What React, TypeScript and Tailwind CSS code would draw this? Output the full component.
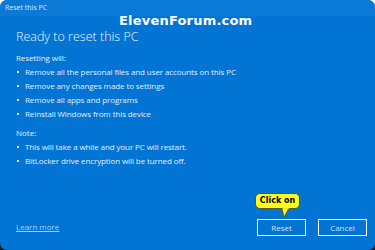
import React from "react";

const resetting = [
  "Remove all the personal files and user accounts on this PC",
  "Remove any changes made to settings",
  "Remove all apps and programs",
  "Reinstall Windows from this device",
];

const notes = [
  "This will take a while and your PC will restart.",
  "BitLocker drive encryption will be turned off.",
];

const Bullet = ({ text }: { text: string }) => (
  <li className="flex items-center h-[14px]">
    <span className="w-[2px] h-[2px] bg-[#d6e8f8] ml-[1px] mr-[6px]" />
    <span>{text}</span>
  </li>
);

const App = () => {
  return (
    <div className="w-[375px] h-[250px] bg-gradient-to-b from-white to-[#1c1c1c] overflow-hidden">
      <div
        className="relative w-full h-full rounded-[7px] bg-[#0174d4] flex flex-col text-[#e4f0fb] overflow-hidden"
        style={{ fontFamily: '"Open Sans", "Noto Sans", sans-serif' }}
      >
        <div className="h-[16px] bg-[#0b7ad7] flex items-center px-[5px] text-[7px] text-[#d8eafa]">
          Reset this PC
        </div>

        <div
          className="absolute left-[119px] top-[11px] text-white text-[13px] font-bold tracking-[0.2px]"
          style={{ fontFamily: '"DejaVu Sans", Verdana, sans-serif' }}
        >
          ElevenForum.com
        </div>

        <div className="flex-1 flex flex-col px-[16px] pt-[11px]">
          <h1 className="text-[12.5px] font-light leading-[20px] text-[#eef6fd]">
            Ready to reset this PC
          </h1>
          <p className="text-[8px] mt-[4px] leading-[14px] tracking-[-0.1px]">Resetting will:</p>
          <ul className="text-[8px] tracking-[-0.1px]">
            {resetting.map((t) => (
              <Bullet key={t} text={t} />
            ))}
          </ul>
          <p className="text-[8px] mt-[5px] leading-[14px]">Note:</p>
          <ul className="text-[8px] tracking-[-0.1px]">
            {notes.map((t) => (
              <Bullet key={t} text={t} />
            ))}
          </ul>

          <div className="mt-auto mb-[14px] flex items-end justify-between">
            <a className="text-[8px] underline text-[#a9d2f5] mb-[3px]">
              Learn more
            </a>
            <div className="flex items-end gap-[12px] mr-[-8px]">
              <div className="relative flex">
                <div className="absolute left-[-2px] bottom-[27px] w-[45px] h-[16px] rounded-[5px] bg-[#ffff1a] border border-[#5a5a00] flex items-center justify-center text-[8px] font-bold text-black"
                  style={{ fontFamily: '"DejaVu Sans", Verdana, sans-serif' }}
                >
                  Click on
                  <svg
                    className="absolute left-[26px] top-[14px]"
                    width="8"
                    height="10"
                    viewBox="0 0 8 10"
                  >
                    <path d="M0 0 L2 9 L7 0 Z" fill="#ffff1a" stroke="#5a5a00" strokeWidth="0.8" />
                    <rect x="0.5" y="-1" width="6.5" height="1.6" fill="#ffff1a" />
                  </svg>
                </div>
                <button className="w-[49px] h-[17px] border-[1.5px] border-white text-[8px] text-[#cfe4f7]">
                  Reset
                </button>
              </div>
              <button className="w-[49px] h-[17px] border-[1.5px] border-white text-[8px] text-[#cfe4f7]">
                Cancel
              </button>
            </div>
          </div>
        </div>
      </div>
    </div>
  );
};

export default App;
